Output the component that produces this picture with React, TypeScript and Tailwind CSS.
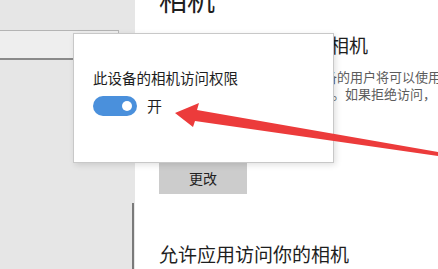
import React from "react";

const font = { fontFamily: '"Noto Sans CJK SC", "Noto Sans", sans-serif' };

export default function App() {
  return (
    <div
      className="relative flex h-[269px] w-[438px] overflow-hidden bg-white"
      style={font}
    >
      {/* Sidebar */}
      <div className="flex h-full w-[135px] shrink-0 flex-col bg-[#e6e6e6]">
        <div className="mt-[30px] h-[30px] w-[119px] border-t border-r border-b-2 border-t-[#b4b4b4] border-r-[#b8b8b8] border-b-[#8a8a8a] bg-[#eeeeee]" />
        <div className="mt-auto ml-[132px] h-[66px] w-[2px] bg-[#7a7a7a]" />
      </div>

      {/* Main */}
      <div className="flex flex-1 flex-col pl-[24px]">
        <div className="mt-[-15px] text-[28px] leading-[28px] text-[#1e1e1e]">相机</div>
        <div className="mt-[22px] whitespace-nowrap text-[19px] leading-[19px] text-[#1e1e1e]">
          允许访问此设备上的相机
        </div>
        <div className="mt-[14px] whitespace-nowrap text-[13px] leading-[17px] text-[#5c5c5c]">
          <div className="ml-[9px]">如果允许访问，使用这台设备的用户将可以使用</div>
          <div className="ml-[4px]">在隐私设置中选择应用访相机。如果拒绝访问，</div>
        </div>
        <button className="mt-[61px] flex h-[31px] w-[88px] items-center justify-center bg-[#cccccc] text-[14px] text-[#222]">
          更改
        </button>
        <div className="mt-[50px] whitespace-nowrap text-[19px] leading-[19px] text-[#1e1e1e]">
          允许应用访问你的相机
        </div>
      </div>

      {/* Popup */}
      <div className="absolute left-[73px] top-[33px] h-[130px] w-[261px] border border-[#c8c8c8] bg-white pl-[19px] pt-[35px] shadow-[2px_2px_6px_rgba(0,0,0,0.12)]">
        <div className="whitespace-nowrap text-[14.5px] leading-[17px] text-[#1e1e1e]">
          此设备的相机访问权限
        </div>
        <div className="mt-[10px] flex items-center">
          <div className="flex h-[20px] w-[44px] items-center justify-end rounded-full bg-[#4a90dc] pr-[5px]">
            <div className="h-[10px] w-[10px] rounded-full bg-white" />
          </div>
          <span className="ml-[10px] text-[15px] leading-[20px] text-[#1e1e1e]">开</span>
        </div>
      </div>

      {/* Red arrow */}
      <svg
        className="pointer-events-none absolute left-0 top-0"
        width="438"
        height="269"
        viewBox="0 0 438 269"
      >
        <polygon
          points="175,113 199,103 197,110 438,152 438,156 195,121 193,127"
          fill="#ec3b3b"
        />
      </svg>
    </div>
  );
}
